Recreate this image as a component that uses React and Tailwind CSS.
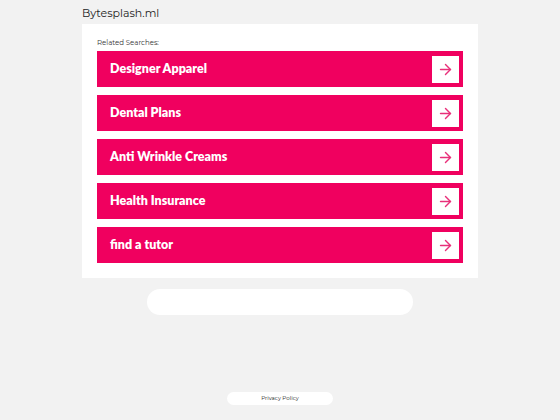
import { ArrowRight } from "lucide-react";

const links = [
  "Designer Apparel",
  "Dental Plans",
  "Anti Wrinkle Creams",
  "Health Insurance",
  "find a tutor",
];

export default function App() {
  return (
    <div
      className="min-h-[420px] bg-[#f2f2f2] flex flex-col items-center"
      style={{ fontFamily: "Montserrat, 'Open Sans', 'Liberation Sans', sans-serif" }}
    >
      <div className="w-[396px] pt-[6px]">
        <div className="text-[11px] leading-[14px] text-[#222] h-[18px]">Bytesplash.ml</div>
        <div className="bg-white px-[15px] pt-[14px] pb-[15px]">
          <div className="text-[7px] leading-[9px] text-[#333] mb-[4px]">Related Searches:</div>
          <div className="flex flex-col gap-[8px]">
            {links.map((l) => (
              <a
                key={l}
                href="#"
                className="h-[36px] bg-[#f0005f] flex items-center justify-between pl-[13px] pr-[4px]"
              >
                <span
                  className="text-white font-extrabold text-[12.5px]"
                  style={{ fontFamily: "Lato, 'Liberation Sans', sans-serif" }}
                >
                  {l}
                </span>
                <span className="w-[27px] h-[27px] bg-white flex items-center justify-center">
                  <ArrowRight size={17} strokeWidth={2} color="#e8307a" />
                </span>
              </a>
            ))}
          </div>
        </div>
      </div>
      <div className="w-[266px] h-[26px] bg-white rounded-[13px] mt-[11px]" />
      <div className="mt-[77px] w-[106px] h-[13px] bg-white rounded-full flex items-center justify-center text-[5.5px] text-[#222]">
        Privacy Policy
      </div>
    </div>
  );
}
